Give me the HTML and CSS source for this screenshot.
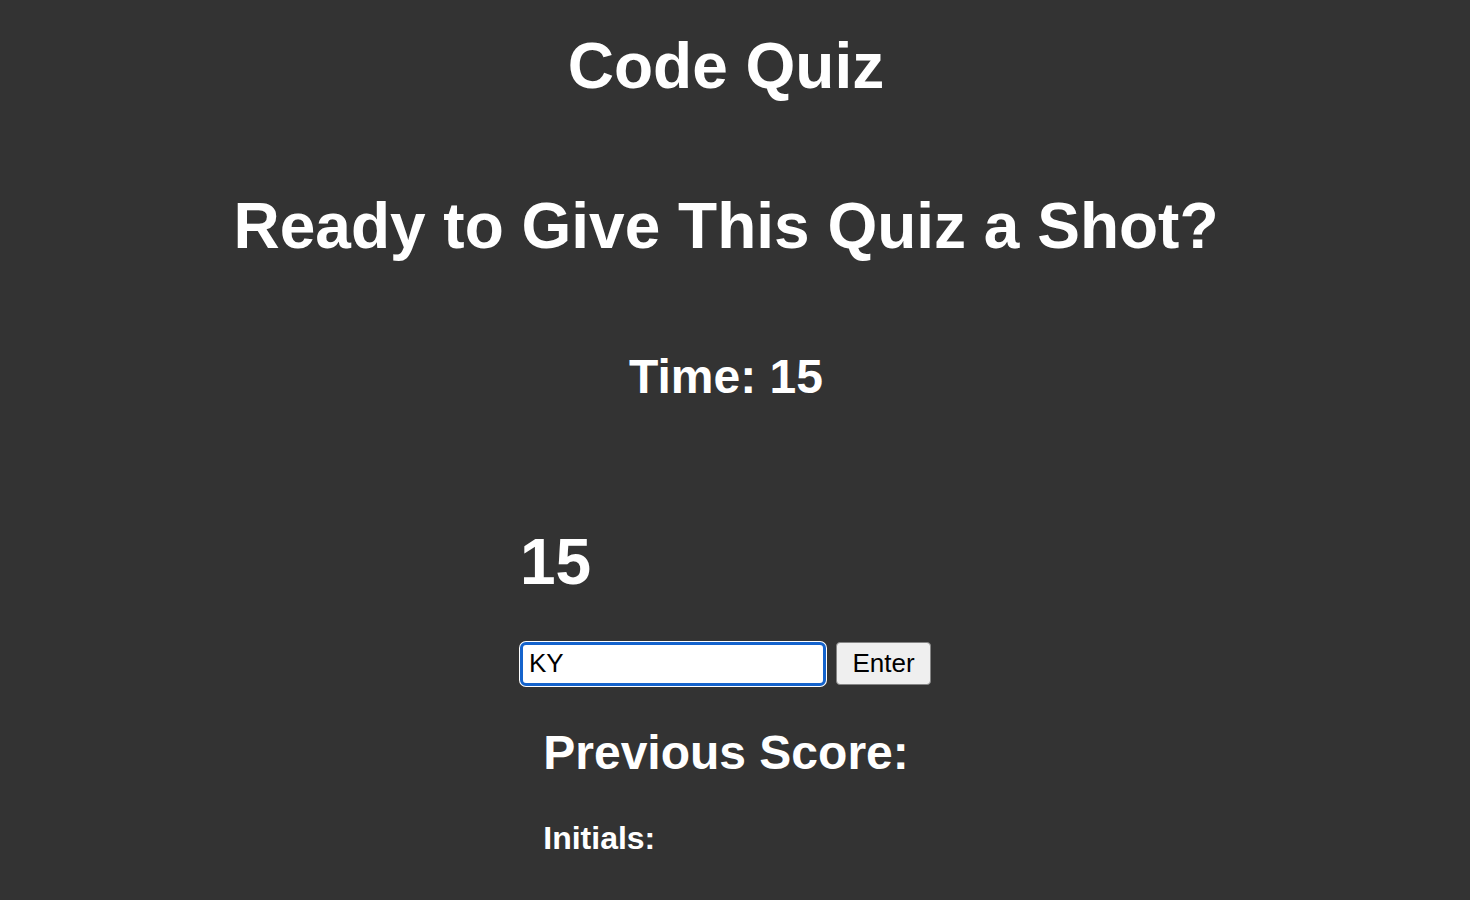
FILE: index.html
```html
<!DOCTYPE html>
<html lang="en">
<head>
<meta charset="utf-8">
<title>Code Quiz</title>
<link rel="stylesheet" href="styles.css">
</head>
<body>
<main class="page">
  <h1 class="title">Code Quiz</h1>
  <h1 class="prompt">Ready to Give This Quiz a Shot?</h1>
  <h2 class="timer">Time: 15</h2>
  <section class="result">
    <h1 class="score">15</h1>
    <form class="entry">
      <input class="initials-input" type="text" value="KY">
      <button class="enter-btn" type="button">Enter</button>
    </form>
  </section>
  <section class="scores">
    <h2 class="scores-title">Previous Score:</h2>
    <h3 class="scores-initials">Initials:</h3>
  </section>
</main>
</body>
</html>
```
FILE: styles.css
```css
* { box-sizing: border-box; }
html, body {
  margin: 0;
  padding: 0;
  background: #333333;
}
body {
  font-family: "Liberation Sans", Arial, Helvetica, sans-serif;
  color: #ffffff;
}
.page {
  padding: 0 18px 0 0;
  display: flex;
  flex-direction: column;
  align-items: center;
  text-align: center;
}
h1, h2, h3 {
  font-weight: bold;
  line-height: 1.15;
  margin: 0;
}
.title {
  font-size: 64px;
  margin-top: 30px;
}
.prompt {
  font-size: 64px;
  margin-top: 86px;
}
.timer {
  font-size: 48px;
  margin-top: 86px;
}
.result {
  width: 412px;
  text-align: left;
  margin-top: 122px;
}
.score {
  font-size: 64px;
}
.entry {
  display: flex;
  align-items: center;
  gap: 10px;
  margin: 42px 0 0 0;
}
.initials-input {
  width: 306px;
  height: 44px;
  margin: 0;
  padding: 0 6px;
  font-family: "Liberation Sans", Arial, sans-serif;
  font-size: 26px;
  color: #000;
  background: #fff;
  border: 3px solid #1463cc;
  border-radius: 6px;
  box-shadow: 0 0 0 1px #ffffff;
  outline: none;
}
.enter-btn {
  width: 95px;
  height: 43px;
  margin: 0;
  padding: 0;
  font-family: "Liberation Sans", Arial, sans-serif;
  font-size: 26px;
  color: #000;
  background: #efefef;
  border: 1px solid #858585;
  border-radius: 4px;
}
.scores {
  width: fit-content;
  text-align: left;
  margin-top: 39px;
}
.scores-title {
  font-size: 48px;
}
.scores-initials {
  font-size: 32px;
  margin-top: 40px;
}
```
